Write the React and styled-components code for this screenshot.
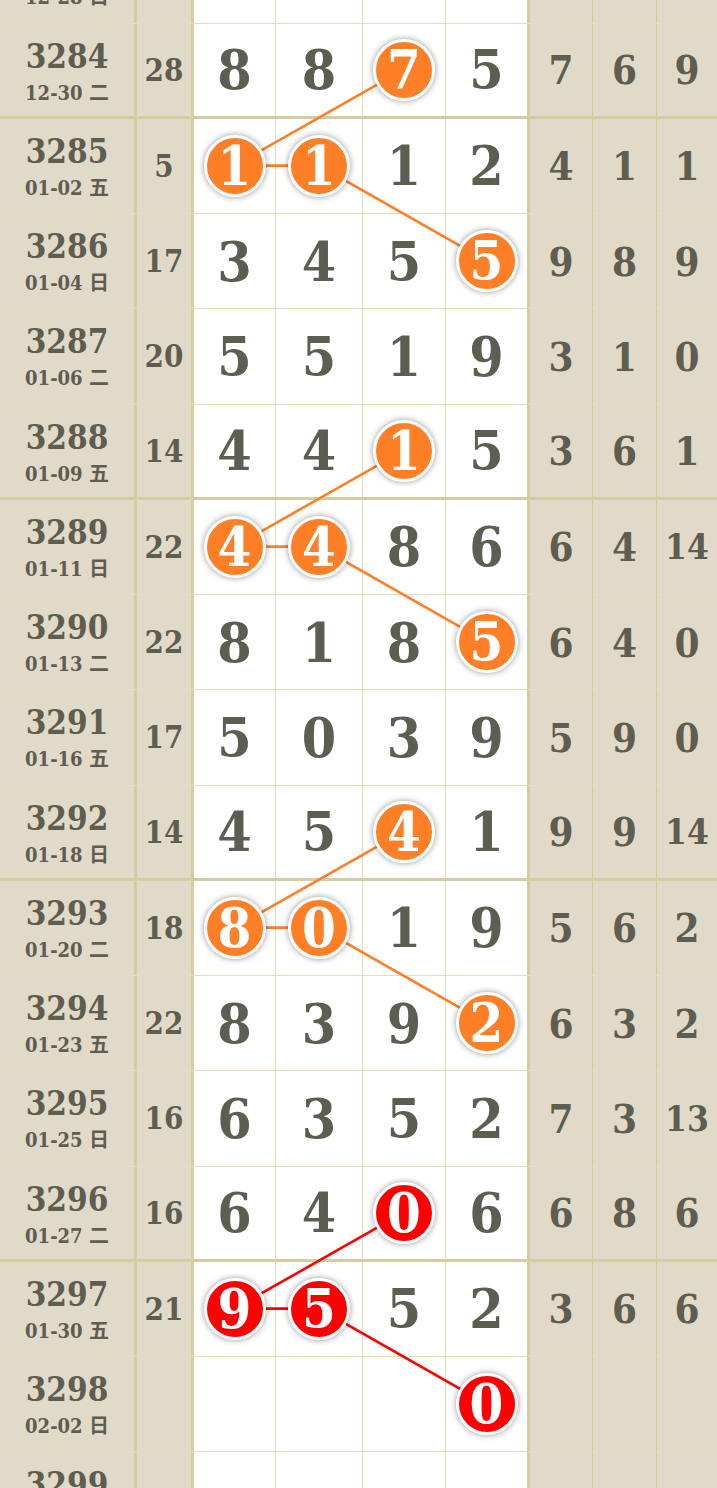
import React from "react";
import styled, { createGlobalStyle } from "styled-components";

const GlobalStyle = createGlobalStyle`
  html, body { margin: 0; padding: 0; background: #ffffff; overflow: hidden; }
  body { width: 717px; height: 1488px; }
  * { box-sizing: border-box; }
`;

const ROW_H = 95.25;
const THIN = "rgba(200, 180, 95, 0.45)";
const THICK = "#d6cca1";
const BEIGE = "#e2dac9";
const INK = "#5d5d51";
const ORANGE = "#ff7f27";
const RED = "#ff0000";
const SERIF = `"DejaVu Serif Condensed", "DejaVu Serif", "Noto Sans CJK SC", serif`;

const COLS = [137, 57, 82, 87, 83, 84, 63, 64, 60];
const colLeft = (i) => COLS.slice(0, i).reduce((a, b) => a + b, 0);
const RIGHT_BORDER = [3, 3, 1, 1, 1, 3, 1, 1, 0];
const colCenter = (i) => colLeft(i) + (COLS[i] - RIGHT_BORDER[i]) / 2;

const EMPTY4 = [null, null, null, null];
const EMPTY3 = ["", "", ""];

const rows = [
  { issue: 3283, date: "12-28 日", sum: "", nums: EMPTY4, stats: EMPTY3 },
  { issue: 3284, date: "12-30 二", sum: "28", nums: [8, 8, 7, 5], stats: ["7", "6", "9"], hits: [2] },
  { issue: 3285, date: "01-02 五", sum: "5", nums: [1, 1, 1, 2], stats: ["4", "1", "1"], hits: [0, 1] },
  { issue: 3286, date: "01-04 日", sum: "17", nums: [3, 4, 5, 5], stats: ["9", "8", "9"], hits: [3] },
  { issue: 3287, date: "01-06 二", sum: "20", nums: [5, 5, 1, 9], stats: ["3", "1", "0"] },
  { issue: 3288, date: "01-09 五", sum: "14", nums: [4, 4, 1, 5], stats: ["3", "6", "1"], hits: [2] },
  { issue: 3289, date: "01-11 日", sum: "22", nums: [4, 4, 8, 6], stats: ["6", "4", "14"], hits: [0, 1] },
  { issue: 3290, date: "01-13 二", sum: "22", nums: [8, 1, 8, 5], stats: ["6", "4", "0"], hits: [3] },
  { issue: 3291, date: "01-16 五", sum: "17", nums: [5, 0, 3, 9], stats: ["5", "9", "0"] },
  { issue: 3292, date: "01-18 日", sum: "14", nums: [4, 5, 4, 1], stats: ["9", "9", "14"], hits: [2] },
  { issue: 3293, date: "01-20 二", sum: "18", nums: [8, 0, 1, 9], stats: ["5", "6", "2"], hits: [0, 1] },
  { issue: 3294, date: "01-23 五", sum: "22", nums: [8, 3, 9, 2], stats: ["6", "3", "2"], hits: [3] },
  { issue: 3295, date: "01-25 日", sum: "16", nums: [6, 3, 5, 2], stats: ["7", "3", "13"] },
  { issue: 3296, date: "01-27 二", sum: "16", nums: [6, 4, 0, 6], stats: ["6", "8", "6"], hits: [2], red: true },
  { issue: 3297, date: "01-30 五", sum: "21", nums: [9, 5, 5, 2], stats: ["3", "6", "6"], hits: [0, 1], red: true },
  { issue: 3298, date: "02-02 日", sum: "", nums: [null, null, null, 0], stats: EMPTY3, hits: [3], red: true },
  { issue: 3299, date: "02-04 二", sum: "", nums: EMPTY4, stats: EMPTY3 },
];

const isGroupEnd = (issue) => (issue - 3284) % 4 === 0;
const borderOf = (issue) => (isGroupEnd(issue) ? 3 : 1);
const rowCenterY = (idx) => idx * ROW_H + (ROW_H - borderOf(rows[idx].issue)) / 2;

const chains = [1, 5, 9, 13].map((s) => ({
  color: rows[s].red ? RED : ORANGE,
  pts: [
    [colCenter(4), rowCenterY(s)],
    [colCenter(2), rowCenterY(s + 1)],
    [colCenter(3), rowCenterY(s + 1)],
    [colCenter(5), rowCenterY(s + 2)],
  ],
}));

const Page = styled.div`
  width: 717px;
  height: 1488px;
  overflow: hidden;
  font-family: ${SERIF};
  color: ${INK};
`;

const Table = styled.div`
  position: relative;
  margin-top: -71.75px;
  display: flex;
  flex-direction: column;
`;

const Row = styled.div`
  display: grid;
  grid-template-columns: ${COLS.slice(0, 8).map((c) => c + "px").join(" ")} 1fr;
  height: ${ROW_H}px;
  border-bottom: ${(p) => (p.$groupEnd ? `3px solid ${THICK}` : `1px solid ${THIN}`)};
`;

const Cell = styled.div`
  display: flex;
  align-items: center;
  justify-content: center;
  font-weight: bold;
  background: ${(p) => (p.$white ? "#ffffff" : BEIGE)};
  border-right: ${(p) => (p.$thick ? `3px solid ${THICK}` : p.$none ? "none" : `1px solid ${THIN}`)};
`;

const IssueCell = styled(Cell)`
  flex-direction: column;
  justify-content: flex-start;
  padding-top: 16px;
`;

const IssueNo = styled.div`
  font-size: 33px;
  line-height: 34px;
  height: 34px;
`;

const DateText = styled.div`
  margin-top: 7px;
  font-size: 20px;
  line-height: 24px;
  height: 24px;
  white-space: nowrap;
`;

const SumCell = styled(Cell)`
  font-size: 31px;
`;

const NumCell = styled(Cell)`
  font-size: 55px;
  line-height: 1;
`;

const StatCell = styled(Cell)`
  font-size: ${(p) => (p.$small ? "35px" : "40px")};
`;

const Ball = styled.div`
  position: relative;
  z-index: 2;
  width: 62px;
  height: 62px;
  border-radius: 50%;
  border: 3px solid #ffffff;
  background: ${(p) => (p.$red ? RED : ORANGE)};
  color: #ffffff;
  display: flex;
  align-items: center;
  justify-content: center;
  font-size: 54px;
  line-height: 1;
  box-shadow: 0 0 6px rgba(0, 0, 0, 0.42);
`;

const Overlay = styled.svg`
  position: absolute;
  left: 0;
  top: 0;
  width: 717px;
  height: ${rows.length * ROW_H}px;
  z-index: 1;
  pointer-events: none;
`;

export default function App() {
  return (
    <Page>
      <GlobalStyle />
      <Table>
        {rows.map((r) => (
          <Row key={r.issue} $groupEnd={isGroupEnd(r.issue)}>
            <IssueCell $thick>
              <IssueNo>{r.issue}</IssueNo>
              <DateText>{r.date}</DateText>
            </IssueCell>
            <SumCell $thick>{r.sum}</SumCell>
            {r.nums.map((n, i) => (
              <NumCell key={i} $white $thick={i === 3}>
                {r.hits && r.hits.includes(i) ? (
                  <Ball $red={r.red}>{n}</Ball>
                ) : (
                  n
                )}
              </NumCell>
            ))}
            {r.stats.map((s, i) => (
              <StatCell key={i} $none={i === 2} $small={s.length > 1}>
                {s}
              </StatCell>
            ))}
          </Row>
        ))}
        <Overlay viewBox={`0 0 717 ${rows.length * ROW_H}`}>
          {chains.map((c, i) => (
            <polyline
              key={i}
              points={c.pts.map((p) => p.join(",")).join(" ")}
              fill="none"
              stroke={c.color}
              strokeWidth="2.6"
            />
          ))}
        </Overlay>
      </Table>
    </Page>
  );
}
